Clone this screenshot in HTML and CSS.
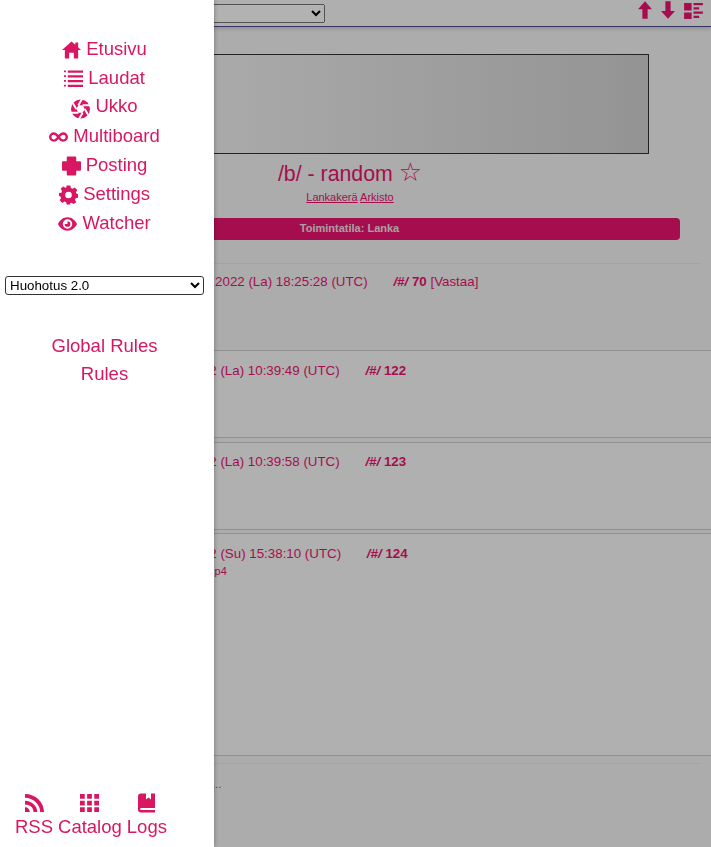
FILE: index.html
```html
<!DOCTYPE html>
<html lang="fi">

<head>
    <meta charset="UTF-8">
    <meta name="viewport" content="width=device-width, initial-scale=1.0">
    <title>/b/ - random</title>
    <link rel="stylesheet" href="styles.css">
</head>

<body>

    <header class="topbar">
        <select class="board-select"></select>
        <div class="topbar-icons">
            <svg class="top-icon" viewBox="0 0 16 20"><path d="M8 0l8 9h-5v11H5V9H0z"/></svg>
            <svg class="top-icon" viewBox="0 0 16 20"><path d="M5 0h6v11h5l-8 9-8-9h5z"/></svg>
            <svg class="top-icon top-icon-wide" viewBox="0 0 20 17"><path d="M0 0h8v8H0zM0 10h8v7H0zM10 0h10v2.500H10zM10 4.500h6V7h-6zM10 9h10v2.500H10zM10 13.500h6V16h-6z"/></svg>
        </div>
    </header>

    <main class="board">
        <div class="banner"></div>
        <h1 class="board-title">/b/ - random <span class="star">☆</span></h1>
        <p class="board-links"><a href="#">Lankakerä</a> <a href="#">Arkisto</a></p>
        <div class="mode-bar">Toimintatila: Lanka</div>
        <hr class="divider first">

        <div class="op-meta">
            <span class="date">23.07.2022 (La) 18:25:28 (UTC)</span>
            <span class="post-no"><i>/#/</i> 70</span> <span class="reply">[Vastaa]</span>
        </div>

        <article class="post post-short">
            <div class="post-meta">
                <span class="date">23.07.2022 (La) 10:39:49 (UTC)</span>
                <span class="post-no"><i>/#/</i> 122</span>
            </div>
        </article>
        <article class="post post-short gap-a">
            <div class="post-meta">
                <span class="date">23.07.2022 (La) 10:39:58 (UTC)</span>
                <span class="post-no"><i>/#/</i> 123</span>
            </div>
        </article>
        <article class="post post-tall gap-b">
            <div class="post-meta">
                <span class="date">24.07.2022 (Su) 15:38:10 (UTC)</span>
                <span class="post-no"><i>/#/</i> 124</span>
            </div>
            <div class="file-name">video.mp4</div>
        </article>

        <hr class="divider last">
        <div class="more">Lisää...</div>
    </main>

    <div class="overlay"></div>

    <!-- Side menu -->
    <aside class="drawer">
        <nav class="menu">
            <a href="#">
                <svg class="icon" viewBox="0 0 20 18"><path d="M10 0l4 3.500V1h3v5.100L20 9h-3v9h-4.500v-6h-5v6H3V9H0z"/></svg>
                Etusivu
            </a>
            <a href="#">
                <svg class="icon" viewBox="0 0 20 18"><path d="M0 0h2v2H0zM4 0h16v2.500H4zM0 5h2v2H0zM4 5h16v2.500H4zM0 10h2v2H0zM4 10h16v2.500H4zM0 15h2v2H0zM4 15h16v2.500H4z"/></svg>
                Laudat
            </a>
            <a href="#" class="menu-tight">
                <svg class="icon icon-low" viewBox="0 0 20 20">
                    <circle cx="10" cy="10" r="10"/>
                    <path class="slits" d="M14.500 10L19 17.800M12.250 13.900L7.750 21.700M7.750 13.900H-1M5.500 10L1 2.200M7.750 6.100L12.250-1.700M12.250 6.100H21"/>
                    <path class="hole" d="M14.500 10l-2.250 3.900h-4.500L5.500 10l2.250-3.900h4.500z"/>
                </svg>
                Ukko
            </a>
            <a href="#">
                <svg class="icon" viewBox="0 0 20 10"><path fill-rule="evenodd" d="M5 0c2.200 0 3.700 1.500 5 3 1.300-1.500 2.800-3 5-3a5 5 0 0 1 0 10c-2.200 0-3.700-1.500-5-3-1.300 1.500-2.800 3-5 3A5 5 0 0 1 5 0zm0 2.500a2.500 2.500 0 0 0 0 5c1.300 0 2.300-1.200 3.400-2.500C7.300 3.700 6.300 2.500 5 2.500zm10 0c-1.300 0-2.300 1.200-3.400 2.500 1.100 1.300 2.100 2.500 3.400 2.500a2.500 2.500 0 0 0 0-5z"/></svg>
                Multiboard
            </a>
            <a href="#">
                <svg class="icon" viewBox="0 0 20 20"><path d="M5 1q0-1 1-1h8q1 0 1 1v4h4q1 0 1 1v8q0 1-1 1h-4v4q0 1-1 1H6q-1 0-1-1v-4H1q-1 0-1-1V6q0-1 1-1h4z"/></svg>
                Posting
            </a>
            <a href="#">
                <svg class="icon" viewBox="0 0 20 20"><path fill-rule="evenodd" d="M8 0h4l.5 2.700 1.700.7L16.500 2l2.800 2.800-1.500 2.200.7 1.800L20 9v4l-2.500.4-.7 1.800 1.500 2.200-2.800 2.100-2.300-1.400-1.700.7L12 20H8l-.5-2.500-1.700-.7-2.300 1.500L.7 15.500l1.500-2.300-.7-1.700L0 11V8l2.500-.5.7-1.700L1.700 3.500 4.500 1l2.200 1.400 1-.4zM10 6.500a3.500 3.500 0 1 0 0 7 3.500 3.500 0 0 0 0-7z"/></svg>
                Settings
            </a>
            <a href="#">
                <svg class="icon" viewBox="0 0 20 14"><path fill-rule="evenodd" d="M10 0c4.500 0 8 3 10 7-2 4-5.500 7-10 7S2 11 0 7c2-4 5.500-7 10-7zm0 2a5 5 0 1 0 0 10 5 5 0 0 0 0-10zm0 2a3 3 0 1 1-3 3h3z"/></svg>
                Watcher
            </a>
        </nav>

        <select class="style-select">
            <option>Huohotus 2.0</option>
        </select>

        <nav class="menu rules">
            <a href="#">Global Rules</a>
            <a href="#">Rules</a>
        </nav>

        <nav class="drawer-footer">
            <a href="#">
                <svg class="icon" viewBox="0 0 20 19"><path d="M0 0c11 0 20 8.500 20 19h-4C16 11 8.500 4 0 4zM0 7c7 0 13 5.500 13 12H9C9 14 5 11 0 11zM0 14c3 0 5 2.200 5 5H0z"/></svg>
                RSS
            </a>
            <a href="#">
                <svg class="icon" viewBox="0 0 20 19"><path d="M0 0h5v5H0zM7.500 0h5v5h-5zM15 0h5v5h-5zM0 7h5v5H0zM7.500 7h5v5h-5zM15 7h5v5h-5zM0 14h5v5H0zM7.500 14h5v5h-5zM15 14h5v5h-5z"/></svg>
                Catalog
            </a>
            <a href="#">
                <svg class="icon icon-book" viewBox="0 0 17 19"><path d="M3 0h5v6l2.500-2L13 6V0h4v14.500H3.500q-1.500 0-1.500 1t1.500 1H17V19H3q-3 0-3-3V3q0-3 3-3z"/></svg>
                Logs
            </a>
        </nav>
    </aside>

</body>

</html>
```

FILE: styles.css
```css
* {
    margin: 0;
    padding: 0;
    box-sizing: border-box;
    font-family: "Liberation Sans", Arial, sans-serif;
}

html,
body {
    height: 100%;
    overflow: hidden;
}

body {
    background-color: #f6f6f6;
    color: #ec1470;
    font-size: 13.33px;
}

a {
    color: inherit;
}

/* top bar */
.topbar {
    display: flex;
    justify-content: space-between;
    align-items: flex-start;
    height: 27px;
    padding: 4px 8px 0 0;
    background-color: #fbfbfb;
    border-bottom: 1px solid #4d4a8c;
    box-shadow: 0 2px 4px rgba(0, 0, 0, 0.15);
}

.board-select {
    width: 325px;
    height: 19px;
}

.topbar-icons {
    display: flex;
    gap: 9px;
    margin-top: -3px;
}

.top-icon {
    display: block;
    width: 14px;
    height: 18px;
    fill: #ec1470;
}

.top-icon-wide {
    width: 19px;
    margin-top: 2px;
    height: 16px;
}

/* board header */
.board {
    display: flex;
    flex-direction: column;
}

.banner {
    align-self: flex-start;
    width: 598px;
    height: 100px;
    margin: 27px 0 0 51px;
    border: 1px solid #333;
    background: linear-gradient(90deg, #ffffff, #d4d4d4);
}

.board-title {
    width: 700px;
    margin-top: 4px;
    font-size: 21.33px;
    font-weight: normal;
    line-height: 32px;
    text-align: center;
}

.star {
    font-family: "DejaVu Sans", sans-serif;
    font-size: 26px;
    line-height: 1;
}

.board-links {
    width: 700px;
    margin-top: 1px;
    font-size: 11px;
    line-height: 13px;
    text-align: center;
}

.mode-bar {
    width: 661px;
    height: 22px;
    margin: 14px 0 0 19px;
    border-radius: 4px;
    background-color: #ec1470;
    color: #f5e3ea;
    font-size: 11px;
    font-weight: bold;
    line-height: 21px;
    text-align: center;
}

.divider {
    width: 689px;
    height: 0;
    margin-left: 12px;
    border: none;
    border-top: 1px solid #ebe7e4;
}

.divider.first {
    margin-top: 23px;
}

.op-meta {
    height: 86px;
    padding: 10px 0 0 178px;
    line-height: 15px;
}

.date {
    margin-right: 22px;
}

.post-no {
    font-weight: bold;
}

.post {
    border-top: 1px solid #cfcfcf;
    border-bottom: 1px solid #cfcfcf;
    background-color: #fcfcfc;
}

.post-short {
    height: 88px;
}

.post-tall {
    height: 223px;
}

.gap-a {
    margin-top: 4px;
}

.gap-b {
    margin-top: 3px;
}

.post-meta {
    padding: 12px 0 0 150px;
    line-height: 15px;
}

.gap-a .post-meta {
    padding-top: 11px;
}

.file-name {
    margin-top: 3px;
    padding-left: 176px;
    font-size: 11px;
    line-height: 14px;
}

.divider.last {
    margin-top: 7px;
}

.more {
    margin-top: 14px;
    padding-left: 186px;
    font-size: 11px;
}

/* dim layer and drawer */
.overlay {
    position: fixed;
    inset: 0;
    background-color: rgba(0, 0, 0, 0.3);
}

.drawer {
    position: fixed;
    top: 0;
    left: 0;
    bottom: 0;
    display: flex;
    flex-direction: column;
    width: 214px;
    padding: 35px 0 6px;
    background-color: #fff;
    box-shadow: 0 0 5px rgba(0, 0, 0, 0.35);
    color: #d81763;
    font-size: 18.5px;
}

.menu {
    display: flex;
    flex-direction: column;
    align-items: center;
    width: 209px;
}

.menu a {
    height: 29px;
    line-height: 28px;
    text-decoration: none;
    white-space: nowrap;
}

.menu a.menu-tight {
    margin: -1px 0 1px;
}

.drawer .icon {
    width: 19px;
    height: 20px;
    vertical-align: -5px;
    fill: #d81763;
}

.drawer .icon-low {
    vertical-align: -7px;
}

.drawer .icon-book {
    width: 17px;
}

.slits {
    fill: none;
    stroke: #fff;
    stroke-width: 2;
}

.hole {
    fill: #fff;
}

.style-select {
    width: 199px;
    height: 19px;
    margin: 38px 0 0 5px;
    border: 1px solid #333;
    border-radius: 3px;
    background-color: #fff;
    font-size: 13.33px;
}

.rules {
    margin-top: 37px;
}

.rules a {
    height: 28px;
}

.drawer-footer {
    display: flex;
    gap: 5px;
    margin-top: auto;
    padding-left: 15px;
}

.drawer-footer a {
    display: flex;
    flex-direction: column;
    align-items: center;
    line-height: 28px;
    text-decoration: none;
}
```
